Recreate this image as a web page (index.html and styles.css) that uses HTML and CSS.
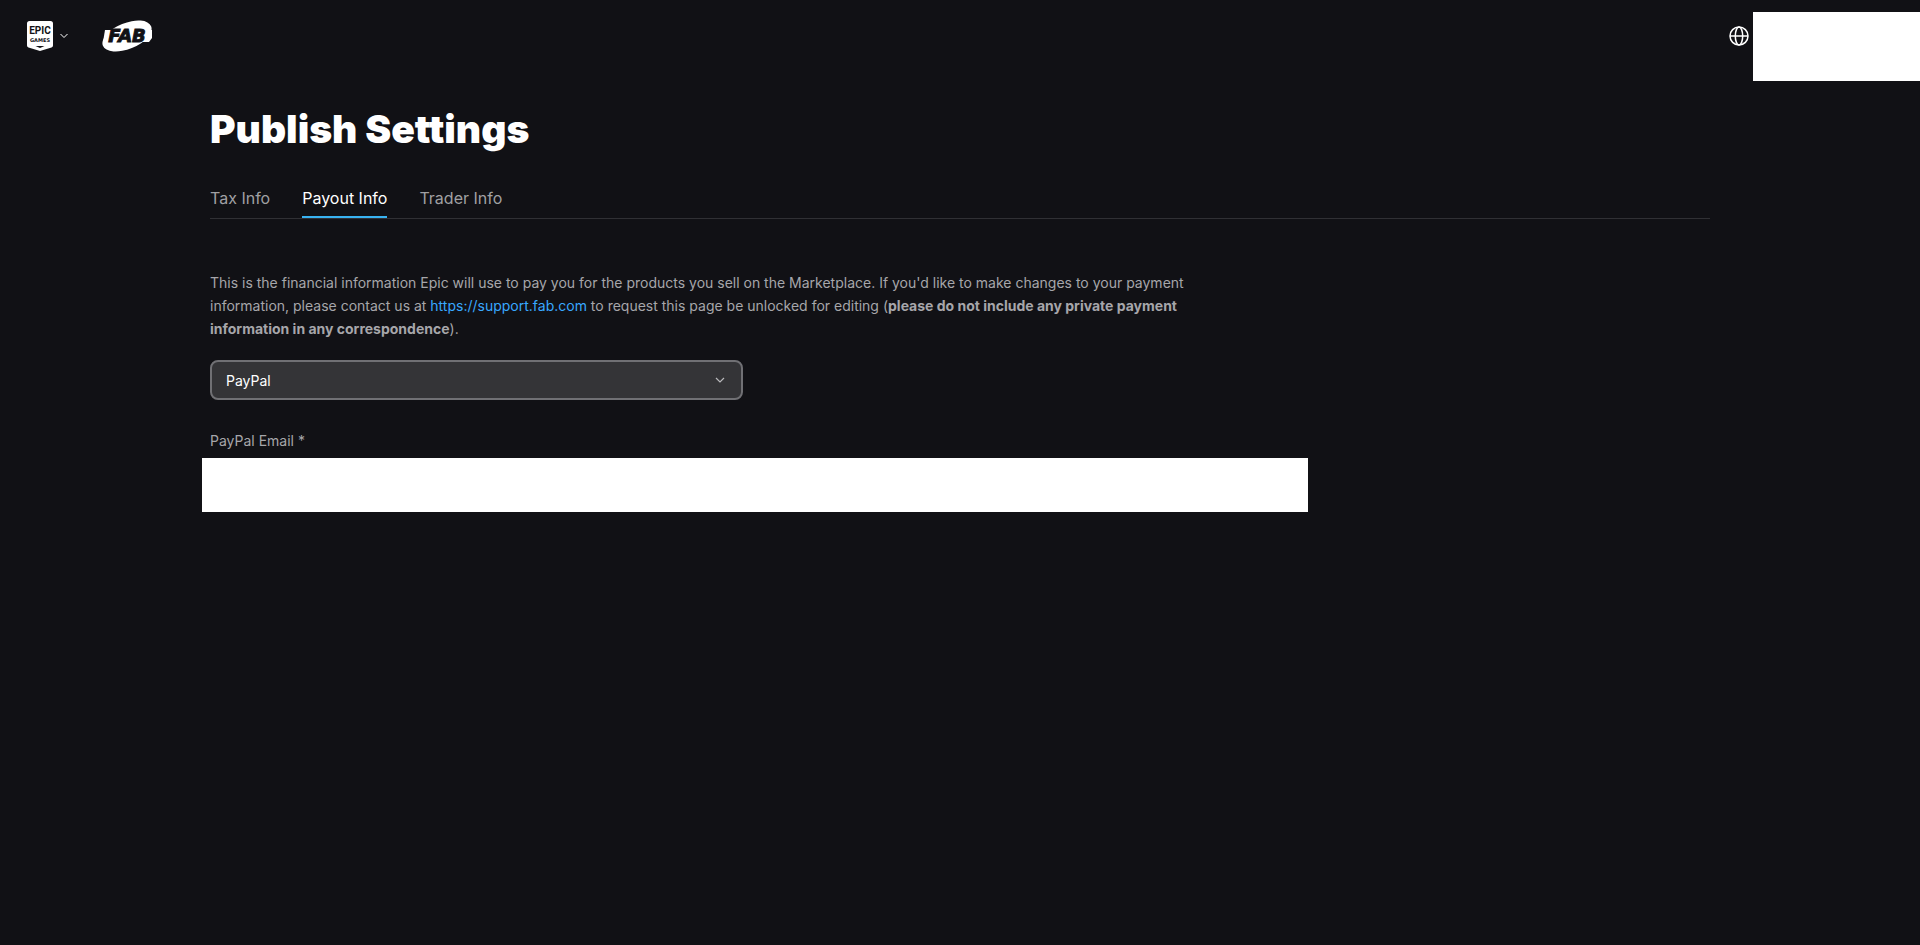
FILE: index.html
```html
<!DOCTYPE html>
<html lang="en">
<head>
    <meta charset="UTF-8">
    <meta name="viewport" content="width=device-width, initial-scale=1.0">
    <title>Publish Settings</title>
    <link rel="stylesheet" href="styles.css">
</head>
<body>
    <header class="header">
        <button class="brand-menu" type="button" aria-label="Epic Games menu">
            <svg width="26" height="30" viewBox="0 0 26 30">
                <path fill="#fff" d="M2.500 0h21A2.500 2.500 0 0 1 26 2.500V24.500q0 1.500-1.500 2.100L13 30 1.500 26.600Q0 26 0 24.500V2.500A2.500 2.500 0 0 1 2.500 0z"/>
                <text class="epic-top" x="13" y="13" text-anchor="middle">EPIC</text>
                <text class="epic-sub" x="13" y="21" text-anchor="middle">GAMES</text>
                <path fill="#111115" d="M8.500 25h9L13 27z"/>
            </svg>
            <svg width="8" height="6" viewBox="0 0 8 6">
                <path fill="none" stroke="#fff" d="M.5 1 4 4.500 7.500 1"/>
            </svg>
        </button>
        <a class="fab" href="#" aria-label="Fab">
            <svg width="50" height="32" viewBox="0 0 50 32">
                <ellipse cx="25" cy="16" rx="26" ry="13" transform="rotate(-22 25 16)" fill="#fff"/>
                <path d="M3 10h47v8l-3 4H1z" fill="#fff"/>
                <text class="fab-text" x="25" y="22" text-anchor="middle">FAB</text>
            </svg>
        </a>
        <button class="language" type="button" aria-label="Language">
            <svg width="20" height="20" viewBox="0 0 20 20" fill="none" stroke="#fff" stroke-width="1.500">
                <circle cx="10" cy="10" r="9"/>
                <ellipse cx="10" cy="10" rx="3.700" ry="9"/>
                <path d="M1 10h18"/>
            </svg>
        </button>
        <div class="account"></div>
    </header>

    <main class="content">
        <h1>Publish Settings</h1>
        <nav class="tabs">
            <a class="tab" href="#">Tax Info</a>
            <a class="tab active" href="#">Payout Info</a>
            <a class="tab" href="#">Trader Info</a>
        </nav>

        <form class="payout">
            <p>This is the financial information Epic will use to pay you for the products you sell on the Marketplace. If you'd like to make changes to your payment information, please contact us at <a href="https://support.fab.com">https://support.fab.com</a> to request this page be unlocked for editing (<strong>please do not include any private payment information in any correspondence</strong>).</p>
            <select class="method" aria-label="Payout method">
                <option>PayPal</option>
            </select>
            <label for="email">PayPal Email *</label>
            <input class="email" id="email" type="email">
        </form>
    </main>
</body>
</html>
```

FILE: styles.css
```css
* {
    box-sizing: border-box;
}
body {
    margin: 0;
    background-color: #111115;
    color: #fff;
    font-family: Inter, sans-serif;
    font-size: 14px;
}
button {
    padding: 0;
    border: none;
    background: none;
    cursor: pointer;
}
svg {
    display: block;
}
.header {
    display: flex;
    align-items: center;
    height: 72px;
    padding-left: 27px;
}
.brand-menu {
    display: flex;
    align-items: center;
    gap: 7px;
}
.epic-top {
    font: bold 10px Roboto, sans-serif;
    fill: #111115;
}
.epic-sub {
    font: bold 5px "DejaVu Sans", sans-serif;
    fill: #111115;
}
.fab {
    margin-left: 34px;
}
.fab-text {
    font: italic bold 18px "DejaVu Sans", sans-serif;
    fill: #111115;
    stroke: #111115;
    stroke-width: 1px;
}
.language {
    margin-left: auto;
}
.account {
    width: 167px;
    height: 69px;
    margin: 12px 0 0 4px;
    align-self: flex-start;
    background-color: #fff;
}
.content {
    max-width: 1500px;
    margin: 0 auto;
    padding-top: 32px;
}
h1 {
    margin: 0;
    font-size: 39px;
    font-weight: 900;
    line-height: 50px;
}
.tabs {
    display: flex;
    gap: 32px;
    margin-top: 32px;
    border-bottom: 1px solid #303034;
}
.tab {
    padding-bottom: 6px;
    border-bottom: 2px solid transparent;
    color: #a0a0a3;
    font-size: 16px;
    line-height: 24px;
    text-decoration: none;
}
.tab.active {
    border-color: #38b2f0;
    color: #fff;
}
.payout {
    display: flex;
    flex-direction: column;
    align-items: flex-start;
    max-width: 1098px;
    margin-top: 52px;
}
.payout p {
    max-width: 1024px;
    margin: 0 0 20px;
    color: #a6a6aa;
    line-height: 23px;
}
.payout p a {
    color: #38a8ff;
    text-decoration: none;
}
.method {
    width: 533px;
    max-width: 100%;
    height: 40px;
    padding: 0 14px;
    border: 2px solid #707074;
    border-radius: 8px;
    appearance: none;
    background: #343437 url("data:image/svg+xml,%3Csvg xmlns='http://www.w3.org/2000/svg' width='10' height='6'%3E%3Cpath d='M1 1 5 5 9 1' fill='none' stroke='%23b8b8bb' stroke-width='1.2'/%3E%3C/svg%3E") no-repeat right 16px center;
    color: #fff;
    font: inherit;
}
.payout label {
    margin-top: 30px;
    color: #a6a6aa;
    line-height: 22px;
}
.email {
    align-self: stretch;
    height: 54px;
    margin: 6px 0 0 -8px;
    padding: 0 16px;
    border: none;
    background-color: #fff;
    font: inherit;
}
```
